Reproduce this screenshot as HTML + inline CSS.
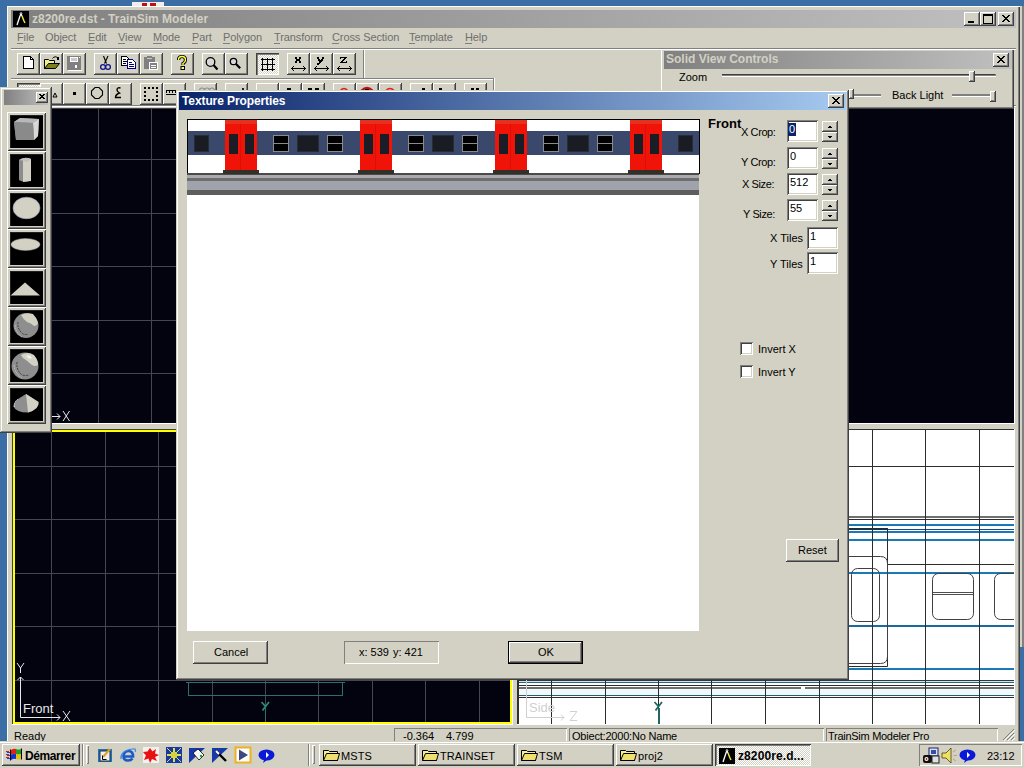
<!DOCTYPE html>
<html><head><meta charset="utf-8"><title>TrainSim Modeler</title>
<style>
*{margin:0;padding:0;box-sizing:border-box}
html,body{width:1024px;height:768px;overflow:hidden}
body{background:#3A6EA5;position:relative;font-family:"Liberation Sans",sans-serif;font-size:11px;color:#000}
.a{position:absolute}
svg.a{overflow:visible}
.btn{position:absolute;background:#D3D1C3;box-shadow:inset -1px -1px #404040,inset 1px 1px #FFFFFF,inset -2px -2px #808080,inset 2px 2px #D3D1C3}
.tb{position:absolute;background:#D3D1C3;box-shadow:inset -1px -1px #404040,inset 1px 1px #FFFFFF,inset -2px -2px #808080}
.sunk{position:absolute;background:#fff;box-shadow:inset 1px 1px #808080,inset -1px -1px #FFFFFF,inset 2px 2px #404040,inset -2px -2px #D3D1C3}
.pane{position:absolute;box-shadow:inset 1px 1px #808080,inset -1px -1px #FFFFFF}
.t{position:absolute;white-space:nowrap;line-height:1}
</style></head><body>

<div class="a" style="left:132px;top:2px;width:32px;height:5px;background:#f2ecec"></div>
<div class="a" style="left:142px;top:3px;width:5px;height:3px;background:#c01010"></div>
<div class="a" style="left:150px;top:3px;width:6px;height:3px;background:#c01010"></div>
<div class="a" style="left:1019px;top:6px;width:5px;height:641px;background:#D3D1C3;box-shadow:inset 1px 0 #fff,inset -2px 0 #808080"></div>
<div class="a" style="left:7px;top:6px;width:1013px;height:762px;background:#D3D1C3;box-shadow:inset 1px 1px #fff,inset -1px 0 #404040,inset -2px 0 #808080"></div>
<div class="a" style="left:11px;top:10px;width:1005px;height:18px;background:linear-gradient(90deg,#808080,#C0C0C0)"></div>
<svg class="a" style="left:13px;top:11px" width="16" height="16" viewBox="0 0 16 16"><rect width="16" height="16" fill="#000"/><path d="M4 14 L7 5 L8 3 L9 5" stroke="#fff" stroke-width="1.3" fill="none"/><path d="M9 5 L11 10 L12 12" stroke="#E8E840" stroke-width="1.5" fill="none"/><circle cx="8" cy="2.5" r="1" fill="none" stroke="#fff" stroke-width="0.6"/></svg>

<div class="t" style="left:32px;top:13px;font-size:12px;font-weight:bold;color:#D3D1C3;letter-spacing:0px">z8200re.dst - TrainSim Modeler</div>
<div class="btn" style="left:964px;top:12px;width:16px;height:14px;"></div>
<svg class="a" style="left:964px;top:12px;" width="16" height="14" viewBox="0 0 16 14" shape-rendering="crispEdges"><rect x="4" y="9" width="6" height="2" fill="#000"/></svg>
<div class="btn" style="left:980px;top:12px;width:16px;height:14px;"></div>
<svg class="a" style="left:980px;top:12px;" width="16" height="14" viewBox="0 0 16 14" shape-rendering="crispEdges"><rect x="3" y="2" width="9" height="9" fill="none" stroke="#000" stroke-width="1"/><rect x="3" y="2" width="9" height="2" fill="#000"/></svg>
<div class="btn" style="left:998px;top:12px;width:16px;height:14px;"></div>
<svg class="a" style="left:998px;top:12px;" width="16" height="14" viewBox="0 0 16 14" shape-rendering="crispEdges"><g fill="#000"><rect x="4" y="3" width="1" height="1"/><rect x="5" y="3" width="1" height="1"/><rect x="10" y="3" width="1" height="1"/><rect x="11" y="3" width="1" height="1"/><rect x="5" y="4" width="1" height="1"/><rect x="6" y="4" width="1" height="1"/><rect x="9" y="4" width="1" height="1"/><rect x="10" y="4" width="1" height="1"/><rect x="6" y="5" width="1" height="1"/><rect x="7" y="5" width="1" height="1"/><rect x="8" y="5" width="1" height="1"/><rect x="9" y="5" width="1" height="1"/><rect x="7" y="6" width="1" height="1"/><rect x="8" y="6" width="1" height="1"/><rect x="6" y="7" width="1" height="1"/><rect x="7" y="7" width="1" height="1"/><rect x="8" y="7" width="1" height="1"/><rect x="9" y="7" width="1" height="1"/><rect x="5" y="8" width="1" height="1"/><rect x="6" y="8" width="1" height="1"/><rect x="9" y="8" width="1" height="1"/><rect x="10" y="8" width="1" height="1"/><rect x="4" y="9" width="1" height="1"/><rect x="5" y="9" width="1" height="1"/><rect x="10" y="9" width="1" height="1"/><rect x="11" y="9" width="1" height="1"/></g></svg>
<div class="t" style="left:17px;top:32px;font-size:11px;color:#6E6E6E;letter-spacing:-0.1px">File</div>
<div class="t" style="left:45px;top:32px;font-size:11px;color:#6E6E6E;letter-spacing:-0.1px">Object</div>
<div class="t" style="left:88px;top:32px;font-size:11px;color:#6E6E6E;letter-spacing:-0.1px">Edit</div>
<div class="t" style="left:118px;top:32px;font-size:11px;color:#6E6E6E;letter-spacing:-0.1px">View</div>
<div class="t" style="left:153px;top:32px;font-size:11px;color:#6E6E6E;letter-spacing:-0.1px">Mode</div>
<div class="t" style="left:192px;top:32px;font-size:11px;color:#6E6E6E;letter-spacing:-0.1px">Part</div>
<div class="t" style="left:223px;top:32px;font-size:11px;color:#6E6E6E;letter-spacing:-0.1px">Polygon</div>
<div class="t" style="left:274px;top:32px;font-size:11px;color:#6E6E6E;letter-spacing:-0.1px">Transform</div>
<div class="t" style="left:332px;top:32px;font-size:11px;color:#6E6E6E;letter-spacing:-0.1px">Cross Section</div>
<div class="t" style="left:409px;top:32px;font-size:11px;color:#6E6E6E;letter-spacing:-0.1px">Template</div>
<div class="t" style="left:465px;top:32px;font-size:11px;color:#6E6E6E;letter-spacing:-0.1px">Help</div>
<div class="a" style="left:17px;top:43px;width:6px;height:1px;background:#808080"></div>
<div class="a" style="left:88px;top:43px;width:6px;height:1px;background:#808080"></div>
<div class="a" style="left:118px;top:43px;width:7px;height:1px;background:#808080"></div>
<div class="a" style="left:153px;top:43px;width:9px;height:1px;background:#808080"></div>
<div class="a" style="left:192px;top:43px;width:6px;height:1px;background:#808080"></div>
<div class="a" style="left:223px;top:43px;width:7px;height:1px;background:#808080"></div>
<div class="a" style="left:274px;top:43px;width:6px;height:1px;background:#808080"></div>
<div class="a" style="left:332px;top:43px;width:7px;height:1px;background:#808080"></div>
<div class="a" style="left:409px;top:43px;width:6px;height:1px;background:#808080"></div>
<div class="a" style="left:465px;top:43px;width:7px;height:1px;background:#808080"></div>
<div class="a" style="left:11px;top:48px;width:1005px;height:1px;background:#808080"></div>
<div class="a" style="left:11px;top:49px;width:1005px;height:1px;background:#fff"></div>
<div class="a" style="left:11px;top:50px;width:353px;height:29px;background:#D3D1C3"></div>
<div class="a" style="left:363px;top:50px;width:1px;height:29px;background:#808080"></div>
<div class="a" style="left:364px;top:50px;width:1px;height:29px;background:#fff"></div>
<div class="a" style="left:11px;top:78px;width:484px;height:1px;background:#808080"></div>
<div class="a" style="left:11px;top:79px;width:484px;height:1px;background:#fff"></div>
<div class="tb" style="left:17px;top:53px;width:23px;height:22px;"></div>
<div class="tb" style="left:40px;top:53px;width:23px;height:22px;"></div>
<div class="tb" style="left:63px;top:53px;width:23px;height:22px;"></div>
<div class="tb" style="left:94px;top:53px;width:23px;height:22px;"></div>
<div class="tb" style="left:117px;top:53px;width:23px;height:22px;"></div>
<div class="tb" style="left:140px;top:53px;width:23px;height:22px;"></div>
<div class="tb" style="left:171px;top:53px;width:23px;height:22px;"></div>
<div class="tb" style="left:202px;top:53px;width:23px;height:22px;"></div>
<div class="tb" style="left:225px;top:53px;width:23px;height:22px;"></div>
<div class="a" style="left:256px;top:53px;width:23px;height:22px;background-color:#E8E6E0;background-image:repeating-conic-gradient(#fff 0 25%,#D3D1C3 0 50%);background-size:2px 2px;box-shadow:inset 1px 1px #404040,inset 2px 2px #808080,inset -1px -1px #fff"></div>
<div class="tb" style="left:287px;top:53px;width:23px;height:22px;"></div>
<div class="tb" style="left:310px;top:53px;width:23px;height:22px;"></div>
<div class="tb" style="left:333px;top:53px;width:23px;height:22px;"></div>
<div class="a" style="left:11px;top:105px;width:1005px;height:1px;background:#808080"></div>
<div class="a" style="left:11px;top:106px;width:1005px;height:1px;background:#fff"></div>
<div class="a" style="left:17px;top:83px;width:23px;height:22px;background-color:#E8E6E0;background-image:repeating-conic-gradient(#fff 0 25%,#D3D1C3 0 50%);background-size:2px 2px;box-shadow:inset 1px 1px #404040,inset 2px 2px #808080,inset -1px -1px #fff"></div>
<div class="tb" style="left:40px;top:83px;width:23px;height:22px;"></div>
<div class="tb" style="left:63px;top:83px;width:23px;height:22px;"></div>
<div class="tb" style="left:86px;top:83px;width:23px;height:22px;"></div>
<div class="tb" style="left:109px;top:83px;width:23px;height:22px;"></div>
<div class="tb" style="left:140px;top:83px;width:23px;height:22px;"></div>
<div class="tb" style="left:163px;top:83px;width:23px;height:22px;"></div>
<div class="tb" style="left:194px;top:83px;width:23px;height:22px;"></div>
<div class="tb" style="left:225px;top:83px;width:23px;height:22px;"></div>
<div class="tb" style="left:256px;top:83px;width:23px;height:22px;"></div>
<div class="tb" style="left:279px;top:83px;width:23px;height:22px;"></div>
<div class="tb" style="left:302px;top:83px;width:23px;height:22px;"></div>
<div class="tb" style="left:333px;top:83px;width:23px;height:22px;"></div>
<div class="tb" style="left:356px;top:83px;width:23px;height:22px;"></div>
<div class="tb" style="left:379px;top:83px;width:23px;height:22px;"></div>
<div class="tb" style="left:410px;top:83px;width:23px;height:22px;"></div>
<div class="tb" style="left:433px;top:83px;width:23px;height:22px;"></div>
<div class="tb" style="left:464px;top:83px;width:23px;height:22px;"></div>
<div class="a" style="left:493px;top:78px;width:1px;height:28px;background:#808080"></div>
<div class="a" style="left:494px;top:78px;width:1px;height:28px;background:#fff"></div>
<svg class="a" style="left:17px;top:53px" width="23" height="22" viewBox="0 0 23 22" shape-rendering="crispEdges"><path d="M6.5 3.5H13.5L16.5 6.5V15.5H6.5Z" fill="#fff" stroke="#000"/><path d="M13 3.5V6.5H16.5" fill="none" stroke="#000"/></svg>
<svg class="a" style="left:40px;top:53px" width="23" height="22" viewBox="0 0 23 22"><path d="M4.5 6.5H8.5L9.5 7.5H14.5V15.5H4.5Z" fill="#F0F090" stroke="#000"/><path d="M4.5 15.5L8.5 10.5H19.5L15.5 15.5Z" fill="#80801A" stroke="#000"/><path d="M12.5 5.5Q15 2 18.5 5.5" fill="none" stroke="#000"/><path d="M17 4h2v3h-2z" fill="#000"/></svg>
<svg class="a" style="left:63px;top:53px" width="23" height="22" viewBox="0 0 23 22" shape-rendering="crispEdges"><rect x="4" y="3" width="14" height="14" fill="#808080"/><rect x="7" y="4" width="8" height="5" fill="#fff"/><rect x="8" y="5" width="6" height="3" fill="#C8C8C8"/><rect x="12" y="12" width="2" height="3" fill="#fff"/><rect x="16" y="4" width="1" height="1" fill="#fff"/><rect x="5" y="17" width="14" height="1" fill="#fff"/></svg>
<svg class="a" style="left:94px;top:53px" width="23" height="22" viewBox="0 0 23 22"><path d="M9.5 3L12.5 10.5M14 3L10.5 10.5" stroke="#000" stroke-width="1.1" fill="none"/><circle cx="9" cy="14" r="2.4" fill="none" stroke="#10108A" stroke-width="1.3"/><circle cx="14" cy="14" r="2.4" fill="none" stroke="#10108A" stroke-width="1.3"/></svg>
<svg class="a" style="left:117px;top:53px" width="23" height="22" viewBox="0 0 23 22" shape-rendering="crispEdges"><path d="M4.5 3.5H9.5L11.5 5.5V12.5H4.5Z" fill="#fff" stroke="#000"/><path d="M6 6h3v1h-3zM6 8h4v1h-4zM6 10h3v1h-3z" fill="#000"/><path d="M10.5 6.5H15.5L18.5 9.5V15.5H10.5Z" fill="#fff" stroke="#000080"/><path d="M12 9h3v1h-3zM12 11h5v1h-5zM12 13h5v1h-5z" fill="#000080"/></svg>
<svg class="a" style="left:140px;top:53px" width="23" height="22" viewBox="0 0 23 22" shape-rendering="crispEdges"><rect x="4" y="4" width="11" height="12" fill="#808080"/><rect x="7" y="3" width="5" height="2" fill="#808080"/><rect x="7" y="5" width="5" height="1" fill="#C8C8C8"/><rect x="9" y="9" width="9" height="8" fill="#fff"/><rect x="10" y="10" width="7" height="6" fill="#808080"/><rect x="11" y="12" width="5" height="1" fill="#fff"/><rect x="11" y="14" width="5" height="1" fill="#fff"/></svg>
<svg class="a" style="left:171px;top:53px" width="23" height="22" viewBox="0 0 23 22"><path d="M7.5 7Q7.5 3.5 11 3.5Q14.5 3.5 14.5 7Q14.5 9 12 10.5V12" fill="none" stroke="#000" stroke-width="3.2"/><path d="M7.5 7Q7.5 3.5 11 3.5Q14.5 3.5 14.5 7Q14.5 9 12 10.5V12" fill="none" stroke="#FFFF40" stroke-width="1.4"/><rect x="10" y="13.5" width="3.5" height="3" fill="#FFFF40" stroke="#000"/></svg>
<svg class="a" style="left:202px;top:53px" width="23" height="22" viewBox="0 0 23 22"><circle cx="8.5" cy="9" r="4.3" fill="#D8D8D8" stroke="#000" stroke-width="1.3"/><path d="M11.5 12L15.5 16.5" stroke="#000" stroke-width="2.2"/></svg>
<svg class="a" style="left:225px;top:53px" width="23" height="22" viewBox="0 0 23 22"><circle cx="8.5" cy="8.5" r="3.2" fill="#D8D8D8" stroke="#000" stroke-width="1.3"/><path d="M10.8 10.8L15.2 15.2" stroke="#000" stroke-width="2.2"/></svg>
<svg class="a" style="left:256px;top:53px" width="23" height="22" viewBox="0 0 23 22" shape-rendering="crispEdges"><path d="M5 6h14v1h-14zM5 11h14v1h-14zM5 16h14v1h-14zM6 5h1v13h-1zM11 5h1v13h-1zM16 5h1v13h-1z" fill="#000"/></svg>
<svg class="a" style="left:287px;top:53px" width="23" height="22" viewBox="0 0 23 22" shape-rendering="crispEdges"><rect x="8" y="4" width="1" height="1" fill="#000"/><rect x="9" y="4" width="1" height="1" fill="#000"/><rect x="12" y="4" width="1" height="1" fill="#000"/><rect x="13" y="4" width="1" height="1" fill="#000"/><rect x="8" y="5" width="1" height="1" fill="#000"/><rect x="9" y="5" width="1" height="1" fill="#000"/><rect x="12" y="5" width="1" height="1" fill="#000"/><rect x="13" y="5" width="1" height="1" fill="#000"/><rect x="9" y="6" width="1" height="1" fill="#000"/><rect x="10" y="6" width="1" height="1" fill="#000"/><rect x="11" y="6" width="1" height="1" fill="#000"/><rect x="12" y="6" width="1" height="1" fill="#000"/><rect x="9" y="7" width="1" height="1" fill="#000"/><rect x="10" y="7" width="1" height="1" fill="#000"/><rect x="11" y="7" width="1" height="1" fill="#000"/><rect x="12" y="7" width="1" height="1" fill="#000"/><rect x="8" y="8" width="1" height="1" fill="#000"/><rect x="9" y="8" width="1" height="1" fill="#000"/><rect x="12" y="8" width="1" height="1" fill="#000"/><rect x="13" y="8" width="1" height="1" fill="#000"/><rect x="8" y="9" width="1" height="1" fill="#000"/><rect x="9" y="9" width="1" height="1" fill="#000"/><rect x="12" y="9" width="1" height="1" fill="#000"/><rect x="13" y="9" width="1" height="1" fill="#000"/><rect x="4" y="15" width="15" height="1" fill="#000"/><rect x="5" y="14" width="1" height="1" fill="#000"/><rect x="17" y="14" width="1" height="1" fill="#000"/><rect x="5" y="16" width="1" height="1" fill="#000"/><rect x="17" y="16" width="1" height="1" fill="#000"/><rect x="6" y="13" width="1" height="1" fill="#000"/><rect x="16" y="13" width="1" height="1" fill="#000"/><rect x="6" y="17" width="1" height="1" fill="#000"/><rect x="16" y="17" width="1" height="1" fill="#000"/></svg>
<svg class="a" style="left:310px;top:53px" width="23" height="22" viewBox="0 0 23 22" shape-rendering="crispEdges"><rect x="7" y="4" width="1" height="1" fill="#000"/><rect x="8" y="4" width="1" height="1" fill="#000"/><rect x="12" y="4" width="1" height="1" fill="#000"/><rect x="13" y="4" width="1" height="1" fill="#000"/><rect x="7" y="5" width="1" height="1" fill="#000"/><rect x="8" y="5" width="1" height="1" fill="#000"/><rect x="12" y="5" width="1" height="1" fill="#000"/><rect x="13" y="5" width="1" height="1" fill="#000"/><rect x="8" y="6" width="1" height="1" fill="#000"/><rect x="9" y="6" width="1" height="1" fill="#000"/><rect x="11" y="6" width="1" height="1" fill="#000"/><rect x="12" y="6" width="1" height="1" fill="#000"/><rect x="8" y="7" width="1" height="1" fill="#000"/><rect x="9" y="7" width="1" height="1" fill="#000"/><rect x="10" y="7" width="1" height="1" fill="#000"/><rect x="11" y="7" width="1" height="1" fill="#000"/><rect x="12" y="7" width="1" height="1" fill="#000"/><rect x="9" y="8" width="1" height="1" fill="#000"/><rect x="10" y="8" width="1" height="1" fill="#000"/><rect x="11" y="8" width="1" height="1" fill="#000"/><rect x="9" y="9" width="1" height="1" fill="#000"/><rect x="10" y="9" width="1" height="1" fill="#000"/><rect x="7" y="10" width="1" height="1" fill="#000"/><rect x="8" y="10" width="1" height="1" fill="#000"/><rect x="9" y="10" width="1" height="1" fill="#000"/><rect x="7" y="11" width="1" height="1" fill="#000"/><rect x="8" y="11" width="1" height="1" fill="#000"/><rect x="4" y="15" width="15" height="1" fill="#000"/><rect x="5" y="14" width="1" height="1" fill="#000"/><rect x="17" y="14" width="1" height="1" fill="#000"/><rect x="5" y="16" width="1" height="1" fill="#000"/><rect x="17" y="16" width="1" height="1" fill="#000"/><rect x="6" y="13" width="1" height="1" fill="#000"/><rect x="16" y="13" width="1" height="1" fill="#000"/><rect x="6" y="17" width="1" height="1" fill="#000"/><rect x="16" y="17" width="1" height="1" fill="#000"/></svg>
<svg class="a" style="left:333px;top:53px" width="23" height="22" viewBox="0 0 23 22" shape-rendering="crispEdges"><rect x="7" y="4" width="1" height="1" fill="#000"/><rect x="8" y="4" width="1" height="1" fill="#000"/><rect x="9" y="4" width="1" height="1" fill="#000"/><rect x="10" y="4" width="1" height="1" fill="#000"/><rect x="11" y="4" width="1" height="1" fill="#000"/><rect x="12" y="4" width="1" height="1" fill="#000"/><rect x="13" y="4" width="1" height="1" fill="#000"/><rect x="7" y="5" width="1" height="1" fill="#000"/><rect x="11" y="5" width="1" height="1" fill="#000"/><rect x="12" y="5" width="1" height="1" fill="#000"/><rect x="10" y="6" width="1" height="1" fill="#000"/><rect x="11" y="6" width="1" height="1" fill="#000"/><rect x="9" y="7" width="1" height="1" fill="#000"/><rect x="10" y="7" width="1" height="1" fill="#000"/><rect x="8" y="8" width="1" height="1" fill="#000"/><rect x="9" y="8" width="1" height="1" fill="#000"/><rect x="13" y="8" width="1" height="1" fill="#000"/><rect x="7" y="9" width="1" height="1" fill="#000"/><rect x="8" y="9" width="1" height="1" fill="#000"/><rect x="9" y="9" width="1" height="1" fill="#000"/><rect x="10" y="9" width="1" height="1" fill="#000"/><rect x="11" y="9" width="1" height="1" fill="#000"/><rect x="12" y="9" width="1" height="1" fill="#000"/><rect x="13" y="9" width="1" height="1" fill="#000"/><rect x="4" y="15" width="15" height="1" fill="#000"/><rect x="5" y="14" width="1" height="1" fill="#000"/><rect x="17" y="14" width="1" height="1" fill="#000"/><rect x="5" y="16" width="1" height="1" fill="#000"/><rect x="17" y="16" width="1" height="1" fill="#000"/><rect x="6" y="13" width="1" height="1" fill="#000"/><rect x="16" y="13" width="1" height="1" fill="#000"/><rect x="6" y="17" width="1" height="1" fill="#000"/><rect x="16" y="17" width="1" height="1" fill="#000"/></svg>
<svg class="a" style="left:40px;top:83px" width="23" height="22" viewBox="0 0 23 22"><path d="M13 14L15 10L17 14Z" fill="#D3D1C3" stroke="#000"/></svg>
<svg class="a" style="left:63px;top:83px" width="23" height="22" viewBox="0 0 23 22" shape-rendering="crispEdges"><rect x="10" y="9" width="3" height="3" fill="#000"/></svg>
<svg class="a" style="left:86px;top:83px" width="23" height="22" viewBox="0 0 23 22"><path d="M9 4.5H13L16.5 8V12L13 15.5H9L5.5 12V8Z" fill="none" stroke="#000" stroke-width="1.1"/></svg>
<svg class="a" style="left:109px;top:83px" width="23" height="22" viewBox="0 0 23 22"><path d="M11.5 5Q8 4 8 7Q8 8.5 10.5 10Q6.5 11.5 6.5 14.5H12" fill="none" stroke="#000" stroke-width="1.4"/></svg>
<svg class="a" style="left:140px;top:83px" width="23" height="22" viewBox="0 0 23 22" shape-rendering="crispEdges"><rect x="4" y="4" width="2" height="2" fill="#000"/><rect x="8" y="4" width="2" height="2" fill="#000"/><rect x="12" y="4" width="2" height="2" fill="#000"/><rect x="16" y="4" width="2" height="2" fill="#000"/><rect x="4" y="8" width="2" height="2" fill="#000"/><rect x="16" y="8" width="2" height="2" fill="#000"/><rect x="4" y="12" width="2" height="2" fill="#000"/><rect x="16" y="12" width="2" height="2" fill="#000"/><rect x="4" y="16" width="2" height="2" fill="#000"/><rect x="8" y="16" width="2" height="2" fill="#000"/><rect x="12" y="16" width="2" height="2" fill="#000"/><rect x="16" y="16" width="2" height="2" fill="#000"/></svg>
<svg class="a" style="left:163px;top:83px" width="23" height="22" viewBox="0 0 23 22" shape-rendering="crispEdges"><rect x="3" y="7" width="11" height="1" fill="#000"/><rect x="3" y="8" width="1" height="2" fill="#000"/><rect x="6" y="8" width="1" height="2" fill="#000"/><rect x="9" y="8" width="1" height="2" fill="#000"/><rect x="12" y="8" width="1" height="2" fill="#000"/><rect x="3" y="11" width="11" height="1" fill="#000"/></svg>
<svg class="a" style="left:194px;top:83px" width="23" height="22" viewBox="0 0 23 22"><path d="M5.5 8Q5.5 5 8 5Q10.5 5 10.5 8M10.5 8Q10.5 5 13 5Q15.5 5 15.5 8M15.5 8Q15.5 5 18 5Q20.5 5 20.5 8" fill="none" stroke="#909090" stroke-width="1.2"/></svg>
<svg class="a" style="left:225px;top:83px" width="23" height="22" viewBox="0 0 23 22" shape-rendering="crispEdges"><rect x="17" y="5" width="2" height="2" fill="#202020"/></svg>
<svg class="a" style="left:279px;top:83px" width="23" height="22" viewBox="0 0 23 22" shape-rendering="crispEdges"><rect x="8" y="5" width="4" height="2" fill="#000"/></svg>
<svg class="a" style="left:302px;top:83px" width="23" height="22" viewBox="0 0 23 22" shape-rendering="crispEdges"><rect x="6" y="5" width="4" height="2" fill="#000"/><rect x="13" y="5" width="4" height="2" fill="#000"/></svg>
<svg class="a" style="left:333px;top:83px" width="23" height="22" viewBox="0 0 23 22"><path d="M7.5 7.5Q11 3.5 14.5 7.5" fill="none" stroke="#E02020" stroke-width="1.6"/></svg>
<svg class="a" style="left:356px;top:83px" width="23" height="22" viewBox="0 0 23 22"><path d="M5.5 7.5Q11 2.5 16.5 7.5" fill="none" stroke="#C01010" stroke-width="2.2"/><path d="M9 7H13" stroke="#000" stroke-width="2"/></svg>
<svg class="a" style="left:379px;top:83px" width="23" height="22" viewBox="0 0 23 22"><path d="M7 7.5Q11 3.5 15 7.5" fill="none" stroke="#E02020" stroke-width="1.6"/></svg>
<svg class="a" style="left:410px;top:83px" width="23" height="22" viewBox="0 0 23 22" shape-rendering="crispEdges"><rect x="12" y="5" width="3" height="2" fill="#000"/></svg>
<svg class="a" style="left:433px;top:83px" width="23" height="22" viewBox="0 0 23 22" shape-rendering="crispEdges"><rect x="6" y="5" width="3" height="2" fill="#000"/></svg>
<svg class="a" style="left:464px;top:83px" width="23" height="22" viewBox="0 0 23 22" shape-rendering="crispEdges"><rect x="7" y="5" width="3" height="3" fill="#000"/><rect x="12" y="5" width="3" height="3" fill="#000"/></svg>
<div class="a" style="left:11px;top:107px;width:1005px;height:620px;background:#D3D1C3"></div>
<div class="a" style="left:12px;top:108px;width:501px;height:316px;background:#fff"></div>
<div class="a" style="left:12px;top:108px;width:500px;height:315px;background:#404040"></div>
<div class="a" style="left:13px;top:109px;width:499px;height:314px;background:#03030F"></div>
<div class="a" style="left:517px;top:108px;width:498px;height:316px;background:#fff"></div>
<div class="a" style="left:517px;top:108px;width:497px;height:315px;background:#404040"></div>
<div class="a" style="left:518px;top:109px;width:496px;height:314px;background:#03030F"></div>
<div class="a" style="left:12px;top:429px;width:501px;height:296px;background:#fff"></div>
<div class="a" style="left:12px;top:429px;width:500px;height:295px;background:#404040"></div>
<div class="a" style="left:13px;top:430px;width:499px;height:294px;background:#FFFF00"></div>
<div class="a" style="left:15px;top:432px;width:495px;height:290px;background:#03030F"></div>
<div class="a" style="left:517px;top:429px;width:498px;height:296px;background:#fff"></div>
<div class="a" style="left:517px;top:429px;width:497px;height:295px;background:#303030"></div>
<div class="a" style="left:519px;top:430px;width:495px;height:294px;background:#fff"></div>
<div class="a" style="left:45px;top:109px;width:1px;height:314px;background:#46464E;"></div>
<div class="a" style="left:98px;top:109px;width:1px;height:314px;background:#46464E;"></div>
<div class="a" style="left:151px;top:109px;width:1px;height:314px;background:#46464E;"></div>
<div class="a" style="left:204px;top:109px;width:1px;height:314px;background:#46464E;"></div>
<div class="a" style="left:256px;top:109px;width:1px;height:314px;background:#46464E;"></div>
<div class="a" style="left:309px;top:109px;width:1px;height:314px;background:#46464E;"></div>
<div class="a" style="left:361px;top:109px;width:1px;height:314px;background:#46464E;"></div>
<div class="a" style="left:414px;top:109px;width:1px;height:314px;background:#46464E;"></div>
<div class="a" style="left:466px;top:109px;width:1px;height:314px;background:#46464E;"></div>
<div class="a" style="left:15px;top:159px;width:496px;height:1px;background:#46464E;"></div>
<div class="a" style="left:15px;top:213px;width:496px;height:1px;background:#46464E;"></div>
<div class="a" style="left:15px;top:266px;width:496px;height:1px;background:#46464E;"></div>
<div class="a" style="left:15px;top:320px;width:496px;height:1px;background:#46464E;"></div>
<div class="a" style="left:15px;top:373px;width:496px;height:1px;background:#46464E;"></div>
<svg class="a" style="left:50px;top:408px" width="24" height="16" viewBox="0 0 24 16"><path d="M0 8.5H10M7 5.5L10 8.5L7 11.5M13 3L19.5 13M19.5 3L13 13" stroke="#E8E8E8" stroke-width="1" fill="none"/></svg>
<div class="a" style="left:51px;top:432px;width:1px;height:290px;background:#46464E;"></div>
<div class="a" style="left:105px;top:432px;width:1px;height:290px;background:#46464E;"></div>
<div class="a" style="left:158px;top:432px;width:1px;height:290px;background:#46464E;"></div>
<div class="a" style="left:212px;top:432px;width:1px;height:290px;background:#46464E;"></div>
<div class="a" style="left:265px;top:432px;width:1px;height:290px;background:#46464E;"></div>
<div class="a" style="left:318px;top:432px;width:1px;height:290px;background:#46464E;"></div>
<div class="a" style="left:372px;top:432px;width:1px;height:290px;background:#46464E;"></div>
<div class="a" style="left:425px;top:432px;width:1px;height:290px;background:#46464E;"></div>
<div class="a" style="left:479px;top:432px;width:1px;height:290px;background:#46464E;"></div>
<div class="a" style="left:15px;top:466px;width:495px;height:1px;background:#46464E;"></div>
<div class="a" style="left:15px;top:519px;width:495px;height:1px;background:#46464E;"></div>
<div class="a" style="left:15px;top:573px;width:495px;height:1px;background:#46464E;"></div>
<div class="a" style="left:15px;top:626px;width:495px;height:1px;background:#46464E;"></div>
<div class="a" style="left:15px;top:680px;width:495px;height:1px;background:#46464E;"></div>
<div class="a" style="left:186px;top:682px;width:159px;height:1px;background:#2A7070;"></div>
<div class="a" style="left:188px;top:682px;width:1px;height:14px;background:#2A7070;"></div>
<div class="a" style="left:342px;top:682px;width:1px;height:14px;background:#2A7070;"></div>
<div class="a" style="left:188px;top:695px;width:155px;height:1px;background:#2A7070;"></div>
<div class="a" style="left:265px;top:708px;width:1px;height:14px;background:#2A7070;"></div>
<svg class="a" style="left:258px;top:698px" width="14" height="16" viewBox="0 0 14 16"><path d="M3.5 4L7.5 8.5M11 4L7.5 8.5L4.5 12.5" stroke="#2E8A78" stroke-width="1.8" fill="none"/></svg>
<svg class="a" style="left:14px;top:660px" width="62" height="64" viewBox="0 0 62 64"><path d="M6.5 17V57.5H46M3.5 20L6.5 17L9.5 20M43 54.5L46 57.5L43 60.5M49 51L56 61M56 51L49 61M3 3L6.5 8L10 3M6.5 8V13" stroke="#E8E8E8" stroke-width="1" fill="none"/></svg>
<div class="t" style="left:23px;top:702px;font-size:13px;color:#E8E8E8">Front</div>
<div class="a" style="left:519px;top:466px;width:495px;height:1px;background:#2C2C2C;"></div>
<div class="a" style="left:519px;top:516px;width:495px;height:2px;background:#707070;"></div>
<div class="a" style="left:519px;top:519px;width:495px;height:1px;background:#2C2C2C;"></div>
<div class="a" style="left:519px;top:524px;width:495px;height:2px;background:#1A7AB8;"></div>
<div class="a" style="left:519px;top:529px;width:495px;height:1px;background:#1A4A80;"></div>
<div class="a" style="left:519px;top:528px;width:369px;height:2px;background:#103058;"></div>
<div class="a" style="left:519px;top:531px;width:495px;height:2px;background:#1A7AB8;"></div>
<div class="a" style="left:519px;top:539px;width:495px;height:2px;background:#1A7AB8;"></div>
<div class="a" style="left:887px;top:564px;width:127px;height:1px;background:#2C2C2C;"></div>
<div class="a" style="left:519px;top:572px;width:495px;height:2px;background:#1A7AB8;"></div>
<div class="a" style="left:519px;top:625px;width:495px;height:2px;background:#1A6AA0;"></div>
<div class="a" style="left:519px;top:668px;width:495px;height:2px;background:#1A7AB8;"></div>
<svg class="a" style="left:519px;top:520px;overflow:hidden" width="495" height="210" viewBox="0 0 495 210" fill="none" stroke-width="1"><path d="M-10 9.5H368.5V146.5H-10" stroke="#2C2C2C"/><path d="M-10 36.5H361.5Q368.5 36.5 368.5 43.5V136.5Q368.5 143.5 361.5 143.5H-10" stroke="#404040"/><rect x="332.5" y="48.5" width="28" height="53" rx="6" stroke="#404040"/><rect x="413.5" y="53.5" width="41" height="46" rx="6" stroke="#404040"/><path d="M414 72.5H454M414 74.5H454" stroke="#505050"/><rect x="475.5" y="53.5" width="41" height="46" rx="6" stroke="#404040"/></svg>
<div class="a" style="left:519px;top:680px;width:495px;height:1px;background:#343444;"></div>
<div class="a" style="left:519px;top:681px;width:495px;height:1px;background:#C8E8F0;"></div>
<div class="a" style="left:519px;top:682px;width:495px;height:1px;background:#286878;"></div>
<div class="a" style="left:519px;top:685px;width:495px;height:1px;background:#2C2C2C;"></div>
<div class="a" style="left:519px;top:687px;width:495px;height:2px;background:#6E6E6E;"></div>
<div class="a" style="left:801px;top:687px;width:4px;height:2px;background:#fff;"></div>
<div class="a" style="left:519px;top:689px;width:495px;height:6px;background:#F0FAFC;"></div>
<div class="a" style="left:519px;top:695px;width:495px;height:1px;background:#206070;"></div>
<div class="a" style="left:519px;top:697px;width:495px;height:1px;background:#2C2C2C;"></div>
<div class="a" style="left:551px;top:430px;width:1px;height:294px;background:#2C2C2C;"></div>
<div class="a" style="left:605px;top:430px;width:1px;height:294px;background:#2C2C2C;"></div>
<div class="a" style="left:658px;top:430px;width:1px;height:294px;background:#2C2C2C;"></div>
<div class="a" style="left:711px;top:430px;width:1px;height:294px;background:#2C2C2C;"></div>
<div class="a" style="left:765px;top:430px;width:1px;height:294px;background:#2C2C2C;"></div>
<div class="a" style="left:819px;top:430px;width:1px;height:294px;background:#2C2C2C;"></div>
<div class="a" style="left:872px;top:430px;width:1px;height:294px;background:#2C2C2C;"></div>
<div class="a" style="left:925px;top:430px;width:1px;height:294px;background:#2C2C2C;"></div>
<div class="a" style="left:979px;top:430px;width:1px;height:294px;background:#2C2C2C;"></div>
<div class="a" style="left:658px;top:708px;width:2px;height:16px;background:#206868;"></div>
<svg class="a" style="left:651px;top:698px" width="14" height="16" viewBox="0 0 14 16"><path d="M3.5 4L7.5 8.5M11 4L7.5 8.5L4.5 12.5" stroke="#1A6A60" stroke-width="1.8" fill="none"/></svg>
<svg class="a" style="left:520px;top:678px" width="62" height="46" viewBox="0 0 62 46"><path d="M6.5 2V39.5H44M41 36.5L44 39.5L41 42.5M50 33.5H57L50 42.5H57" stroke="#D0D0D0" stroke-width="1" fill="none"/></svg>
<div class="t" style="left:529px;top:701px;font-size:13px;color:#D0D0D0">Side</div>
<div class="a" style="left:11px;top:726px;width:1005px;height:15px;background:#D3D1C3"></div>
<div class="pane" style="left:394px;top:728px;width:173px;height:16px;"></div>
<div class="pane" style="left:569px;top:728px;width:255px;height:16px;"></div>
<div class="pane" style="left:826px;top:728px;width:172px;height:16px;"></div>
<div class="t" style="left:14px;top:731px;font-size:11px;">Ready</div>
<div class="t" style="left:403px;top:731px;font-size:11px;">-0.364</div>
<div class="t" style="left:446px;top:731px;font-size:11px;">4.799</div>
<div class="t" style="left:572px;top:731px;font-size:11px;letter-spacing:-0.2px">Obiect:2000:No Name</div>
<div class="t" style="left:828px;top:731px;font-size:11px;letter-spacing:-0.28px">TrainSim Modeler Pro</div>
<svg class="a" style="left:1001px;top:728px;" width="14" height="13" viewBox="0 0 14 13" shape-rendering="crispEdges"><path d="M12.5 1.5L1.5 12.5M12.5 5.5L5.5 12.5M12.5 9.5L9.5 12.5" stroke="#808080" stroke-width="1" fill="none"/><path d="M13.5 2.5L2.5 13.5M13.5 6.5L6.5 13.5M13.5 10.5L10.5 13.5" stroke="#fff" stroke-width="1" fill="none"/></svg>
<div class="a" style="left:0px;top:87px;width:52px;height:346px;background:#D3D1C3;box-shadow:inset -1px -1px #404040,inset 1px 1px #D3D1C3,inset -2px -2px #808080,inset 2px 2px #fff"></div>
<div class="a" style="left:4px;top:90px;width:44px;height:15px;background:linear-gradient(90deg,#808080,#C0C0C0)"></div>
<div class="btn" style="left:36px;top:92px;width:12px;height:11px;"></div>
<svg class="a" style="left:36px;top:92px;" width="12" height="11" viewBox="0 0 12 11" shape-rendering="crispEdges"><g fill="#000"><rect x="3" y="2" width="1" height="1"/><rect x="4" y="2" width="1" height="1"/><rect x="7" y="2" width="1" height="1"/><rect x="8" y="2" width="1" height="1"/><rect x="4" y="3" width="1" height="1"/><rect x="5" y="3" width="1" height="1"/><rect x="6" y="3" width="1" height="1"/><rect x="7" y="3" width="1" height="1"/><rect x="5" y="4" width="1" height="1"/><rect x="6" y="4" width="1" height="1"/><rect x="4" y="5" width="1" height="1"/><rect x="5" y="5" width="1" height="1"/><rect x="6" y="5" width="1" height="1"/><rect x="7" y="5" width="1" height="1"/><rect x="3" y="6" width="1" height="1"/><rect x="4" y="6" width="1" height="1"/><rect x="7" y="6" width="1" height="1"/><rect x="8" y="6" width="1" height="1"/></g></svg>
<div class="a" style="left:7px;top:112px;width:39px;height:39px;background:#D3D1C3;box-shadow:inset 1px 1px #fff,inset -1px -1px #404040,inset 2px 2px #D3D1C3,inset -2px -2px #808080"></div>
<div class="a" style="left:10px;top:115px;width:33px;height:33px;background:#000;box-shadow:inset 1px 1px #202020"></div>
<div class="a" style="left:7px;top:151px;width:39px;height:39px;background:#D3D1C3;box-shadow:inset 1px 1px #fff,inset -1px -1px #404040,inset 2px 2px #D3D1C3,inset -2px -2px #808080"></div>
<div class="a" style="left:10px;top:154px;width:33px;height:33px;background:#000;box-shadow:inset 1px 1px #202020"></div>
<div class="a" style="left:7px;top:190px;width:39px;height:39px;background:#D3D1C3;box-shadow:inset 1px 1px #fff,inset -1px -1px #404040,inset 2px 2px #D3D1C3,inset -2px -2px #808080"></div>
<div class="a" style="left:10px;top:193px;width:33px;height:33px;background:#000;box-shadow:inset 1px 1px #202020"></div>
<div class="a" style="left:7px;top:229px;width:39px;height:39px;background:#D3D1C3;box-shadow:inset 1px 1px #fff,inset -1px -1px #404040,inset 2px 2px #D3D1C3,inset -2px -2px #808080"></div>
<div class="a" style="left:10px;top:232px;width:33px;height:33px;background:#000;box-shadow:inset 1px 1px #202020"></div>
<div class="a" style="left:7px;top:268px;width:39px;height:39px;background:#D3D1C3;box-shadow:inset 1px 1px #fff,inset -1px -1px #404040,inset 2px 2px #D3D1C3,inset -2px -2px #808080"></div>
<div class="a" style="left:10px;top:271px;width:33px;height:33px;background:#000;box-shadow:inset 1px 1px #202020"></div>
<div class="a" style="left:7px;top:307px;width:39px;height:39px;background:#D3D1C3;box-shadow:inset 1px 1px #fff,inset -1px -1px #404040,inset 2px 2px #D3D1C3,inset -2px -2px #808080"></div>
<div class="a" style="left:10px;top:310px;width:33px;height:33px;background:#000;box-shadow:inset 1px 1px #202020"></div>
<div class="a" style="left:7px;top:346px;width:39px;height:39px;background:#D3D1C3;box-shadow:inset 1px 1px #fff,inset -1px -1px #404040,inset 2px 2px #D3D1C3,inset -2px -2px #808080"></div>
<div class="a" style="left:10px;top:349px;width:33px;height:33px;background:#000;box-shadow:inset 1px 1px #202020"></div>
<div class="a" style="left:7px;top:385px;width:39px;height:39px;background:#D3D1C3;box-shadow:inset 1px 1px #fff,inset -1px -1px #404040,inset 2px 2px #D3D1C3,inset -2px -2px #808080"></div>
<div class="a" style="left:10px;top:388px;width:33px;height:33px;background:#000;box-shadow:inset 1px 1px #202020"></div>
<svg class="a" style="left:10px;top:115px" width="33" height="33" viewBox="0 0 33 33"><path d="M4 7L10 3L29 4L28 21L24 25L6 25Z" fill="#8C8C8C"/><path d="M4 7L10 3L29 4L23 8Z" fill="#B8B8B8"/><path d="M23 8L29 4L28 21L24 25Z" fill="#D8D8D8"/><path d="M4 7L23 8L24 25L6 25Z" fill="#8A8A8A"/></svg>
<svg class="a" style="left:10px;top:154px" width="33" height="33" viewBox="0 0 33 33"><path d="M9 6Q13 3 19 5V27Q13 29 9 26Z" fill="#8C8C8C"/><path d="M13 5Q17 3 21 5V27L13 28Z" fill="#D3D1C3"/><path d="M9 6Q15 2 21 5L17 8Q12 6 9 6Z" fill="#C0C0C0"/></svg>
<svg class="a" style="left:10px;top:193px" width="33" height="33" viewBox="0 0 33 33"><ellipse cx="16.5" cy="15" rx="13.5" ry="10.8" fill="#D3D1C3" stroke="#9AA0C0" stroke-width="0.6"/></svg>
<svg class="a" style="left:10px;top:232px" width="33" height="33" viewBox="0 0 33 33"><ellipse cx="15.5" cy="12.5" rx="14.5" ry="6" fill="#D3D1C3" stroke="#9A9AA0" stroke-width="0.5"/></svg>
<svg class="a" style="left:10px;top:271px" width="33" height="33" viewBox="0 0 33 33"><path d="M15 11.5L30 24.5H0.5Z" fill="#D3D1C3"/></svg>
<svg class="a" style="left:13px;top:313px" width="26" height="26" viewBox="0 0 26 26"><circle cx="13" cy="12.5" r="12.5" fill="#8E8E8E"/><path d="M8 2Q14 -1 20 1Q24 5 25 10Q24 13 21 13Q18 10 14 9Q10 6 8 2Z" fill="#D3D1C3"/><path d="M2 12Q3 20 9 24" fill="none" stroke="#D0D0D0" stroke-width="0.8" stroke-dasharray="1.5 1"/><path d="M5 9Q4 16 10 21Q13 22 15 21" fill="none" stroke="#202020" stroke-width="0.7" stroke-dasharray="2 1"/></svg>
<svg class="a" style="left:12px;top:352px" width="28" height="28" viewBox="0 0 28 28"><circle cx="13" cy="14" r="13.5" fill="#8E8E8E"/><path d="M9 3Q16 -1 22 3Q26 8 26 13Q23 15 20 13Q16 10 14 8Q10 6 9 3Z" fill="#D3D1C3"/><path d="M14 4Q18 2 20 6Q17 8 14 4Z" fill="#F0F0F0"/><path d="M2 13Q3 22 10 26" fill="none" stroke="#D0D0D0" stroke-width="0.8" stroke-dasharray="1.5 1"/><path d="M5 10Q4 18 10 23Q14 24 17 23" fill="none" stroke="#202020" stroke-width="0.7" stroke-dasharray="2 1"/></svg>
<svg class="a" style="left:10px;top:388px" width="33" height="33" viewBox="0 0 33 33"><path d="M16 6L28.5 14Q29.5 21 18 24.5Q6 24.5 3.5 18.5Q3.5 14 8 11Z" fill="#8E8E8E"/><path d="M16 6L28.5 14Q29.5 21 18 24.5Z" fill="#D3D1C3"/><path d="M4.5 19Q3.5 14 8.5 11" fill="none" stroke="#E0E0E0" stroke-width="0.8" stroke-dasharray="1.5 1"/></svg>
<div class="a" style="left:661px;top:49px;width:353px;height:60px;background:#D3D1C3;box-shadow:inset 1px 1px #fff,inset -1px -1px #404040,inset -2px -2px #808080"></div>
<div class="a" style="left:664px;top:51px;width:348px;height:18px;background:linear-gradient(90deg,#808080,#C0C0C0)"></div>
<div class="t" style="left:666px;top:53px;font-size:12px;font-weight:bold;color:#D3D1C3">Solid View Controls</div>
<div class="btn" style="left:993px;top:53px;width:16px;height:14px;"></div>
<svg class="a" style="left:993px;top:53px;" width="16" height="14" viewBox="0 0 16 14" shape-rendering="crispEdges"><g fill="#000"><rect x="4" y="3" width="1" height="1"/><rect x="5" y="3" width="1" height="1"/><rect x="10" y="3" width="1" height="1"/><rect x="11" y="3" width="1" height="1"/><rect x="5" y="4" width="1" height="1"/><rect x="6" y="4" width="1" height="1"/><rect x="9" y="4" width="1" height="1"/><rect x="10" y="4" width="1" height="1"/><rect x="6" y="5" width="1" height="1"/><rect x="7" y="5" width="1" height="1"/><rect x="8" y="5" width="1" height="1"/><rect x="9" y="5" width="1" height="1"/><rect x="7" y="6" width="1" height="1"/><rect x="8" y="6" width="1" height="1"/><rect x="6" y="7" width="1" height="1"/><rect x="7" y="7" width="1" height="1"/><rect x="8" y="7" width="1" height="1"/><rect x="9" y="7" width="1" height="1"/><rect x="5" y="8" width="1" height="1"/><rect x="6" y="8" width="1" height="1"/><rect x="9" y="8" width="1" height="1"/><rect x="10" y="8" width="1" height="1"/><rect x="4" y="9" width="1" height="1"/><rect x="5" y="9" width="1" height="1"/><rect x="10" y="9" width="1" height="1"/><rect x="11" y="9" width="1" height="1"/></g></svg>
<div class="t" style="left:679px;top:72px;font-size:11px;">Zoom</div>
<div class="a" style="left:722px;top:74px;width:274px;height:2px;background:#808080;box-shadow:0 1px #fff"></div>
<div class="a" style="left:722px;top:74px;width:273px;height:1px;background:#404040"></div>
<div class="btn" style="left:969px;top:71px;width:6px;height:11px;"></div>
<div class="a" style="left:848px;top:94px;width:33px;height:2px;background:#808080;box-shadow:0 1px #fff"></div>
<div class="btn" style="left:849px;top:89px;width:5px;height:10px;"></div>
<div class="t" style="left:892px;top:90px;font-size:11px;">Back Light</div>
<div class="a" style="left:952px;top:94px;width:43px;height:2px;background:#808080;box-shadow:0 1px #fff"></div>
<div class="btn" style="left:990px;top:91px;width:6px;height:11px;"></div>
<div class="a" style="left:176px;top:90px;width:673px;height:590px;background:#D3D1C3;box-shadow:inset -1px -1px #404040,inset 1px 1px #D3D1C3,inset -2px -2px #808080,inset 2px 2px #fff"></div>
<div class="a" style="left:179px;top:92px;width:667px;height:18px;background:linear-gradient(90deg,#0A246A,#A6CAF0)"></div>
<div class="t" style="left:182px;top:95px;font-size:12px;font-weight:bold;color:#fff;letter-spacing:-0.1px">Texture Properties</div>
<div class="btn" style="left:828px;top:94px;width:16px;height:14px;"></div>
<svg class="a" style="left:828px;top:94px;" width="16" height="14" viewBox="0 0 16 14" shape-rendering="crispEdges"><g fill="#000"><rect x="4" y="3" width="1" height="1"/><rect x="5" y="3" width="1" height="1"/><rect x="10" y="3" width="1" height="1"/><rect x="11" y="3" width="1" height="1"/><rect x="5" y="4" width="1" height="1"/><rect x="6" y="4" width="1" height="1"/><rect x="9" y="4" width="1" height="1"/><rect x="10" y="4" width="1" height="1"/><rect x="6" y="5" width="1" height="1"/><rect x="7" y="5" width="1" height="1"/><rect x="8" y="5" width="1" height="1"/><rect x="9" y="5" width="1" height="1"/><rect x="7" y="6" width="1" height="1"/><rect x="8" y="6" width="1" height="1"/><rect x="6" y="7" width="1" height="1"/><rect x="7" y="7" width="1" height="1"/><rect x="8" y="7" width="1" height="1"/><rect x="9" y="7" width="1" height="1"/><rect x="5" y="8" width="1" height="1"/><rect x="6" y="8" width="1" height="1"/><rect x="9" y="8" width="1" height="1"/><rect x="10" y="8" width="1" height="1"/><rect x="4" y="9" width="1" height="1"/><rect x="5" y="9" width="1" height="1"/><rect x="10" y="9" width="1" height="1"/><rect x="11" y="9" width="1" height="1"/></g></svg>
<div class="a" style="left:187px;top:119px;width:512px;height:512px;background:#fff"></div>
<svg class="a" style="left:187px;top:119px" width="513" height="77" viewBox="0 0 513 77" shape-rendering="crispEdges">
<rect x="0" y="0" width="513" height="55" fill="#000" />
<rect x="1" y="1" width="511" height="11" fill="#fff" />
<rect x="1" y="12" width="511" height="24" fill="#3A486C" />
<rect x="1" y="36" width="511" height="18" fill="#fff" />
<rect x="0" y="54" width="512" height="2" fill="#4A4A4A" />
<rect x="0" y="56" width="512" height="3" fill="#A9A9AE" />
<rect x="0" y="59" width="512" height="3" fill="#6E6E6E" />
<rect x="0" y="62" width="512" height="9" fill="#A0A3AC" />
<rect x="0" y="71" width="512" height="5" fill="#5E5E5E" />
<rect x="36" y="51" width="36" height="4" fill="#33302A" />
<rect x="38" y="1" width="32" height="50" fill="#F01408" />
<rect x="38" y="1" width="32" height="4" fill="#E83020" />
<rect x="53" y="5" width="1" height="46" fill="#D81008" />
<rect x="42" y="15" width="9" height="20" fill="#1A1C26" />
<rect x="58" y="15" width="9" height="20" fill="#1A1C26" />
<rect x="171" y="51" width="36" height="4" fill="#33302A" />
<rect x="173" y="1" width="32" height="50" fill="#F01408" />
<rect x="173" y="1" width="32" height="4" fill="#E83020" />
<rect x="188" y="5" width="1" height="46" fill="#D81008" />
<rect x="177" y="15" width="9" height="20" fill="#1A1C26" />
<rect x="193" y="15" width="9" height="20" fill="#1A1C26" />
<rect x="306" y="51" width="36" height="4" fill="#33302A" />
<rect x="308" y="1" width="32" height="50" fill="#F01408" />
<rect x="308" y="1" width="32" height="4" fill="#E83020" />
<rect x="323" y="5" width="1" height="46" fill="#D81008" />
<rect x="312" y="15" width="9" height="20" fill="#1A1C26" />
<rect x="328" y="15" width="9" height="20" fill="#1A1C26" />
<rect x="441" y="51" width="36" height="4" fill="#33302A" />
<rect x="443" y="1" width="32" height="50" fill="#F01408" />
<rect x="443" y="1" width="32" height="4" fill="#E83020" />
<rect x="458" y="5" width="1" height="46" fill="#D81008" />
<rect x="447" y="15" width="9" height="20" fill="#1A1C26" />
<rect x="463" y="15" width="9" height="20" fill="#1A1C26" />
<rect x="110" y="16" width="22" height="17" fill="#2A2C34" />
<rect x="111" y="17" width="20" height="15" fill="#1A1C24" />
<rect x="86" y="16" width="16" height="17" fill="#8A8A90" />
<rect x="87" y="17" width="14" height="15" fill="#000" />
<rect x="87" y="24" width="14" height="1" fill="#8A8A90" />
<rect x="140" y="16" width="16" height="17" fill="#8A8A90" />
<rect x="141" y="17" width="14" height="15" fill="#000" />
<rect x="141" y="24" width="14" height="1" fill="#8A8A90" />
<rect x="245" y="16" width="22" height="17" fill="#2A2C34" />
<rect x="246" y="17" width="20" height="15" fill="#1A1C24" />
<rect x="221" y="16" width="16" height="17" fill="#8A8A90" />
<rect x="222" y="17" width="14" height="15" fill="#000" />
<rect x="222" y="24" width="14" height="1" fill="#8A8A90" />
<rect x="275" y="16" width="16" height="17" fill="#8A8A90" />
<rect x="276" y="17" width="14" height="15" fill="#000" />
<rect x="276" y="24" width="14" height="1" fill="#8A8A90" />
<rect x="380" y="16" width="22" height="17" fill="#2A2C34" />
<rect x="381" y="17" width="20" height="15" fill="#1A1C24" />
<rect x="356" y="16" width="16" height="17" fill="#8A8A90" />
<rect x="357" y="17" width="14" height="15" fill="#000" />
<rect x="357" y="24" width="14" height="1" fill="#8A8A90" />
<rect x="410" y="16" width="16" height="17" fill="#8A8A90" />
<rect x="411" y="17" width="14" height="15" fill="#000" />
<rect x="411" y="24" width="14" height="1" fill="#8A8A90" />
<rect x="7" y="16" width="15" height="17" fill="#2A2C34" />
<rect x="8" y="17" width="13" height="15" fill="#1A1C24" />
<rect x="491" y="16" width="15" height="17" fill="#2A2C34" />
<rect x="492" y="17" width="13" height="15" fill="#1A1C24" />
</svg>
<div class="t" style="left:708px;top:117px;font-size:13px;font-weight:bold">Front</div>
<div class="t" style="left:741px;top:127px;font-size:11px;letter-spacing:-0.4px">X Crop:</div>
<div class="sunk" style="left:787px;top:120px;width:31px;height:22px;"></div>
<div class="a" style="left:788px;top:123px;width:8px;height:13px;background:#0A246A"></div>
<div class="t" style="left:789px;top:124px;font-size:11px;color:#fff">0</div>
<div class="btn" style="left:822px;top:121px;width:16px;height:11px;"></div>
<svg class="a" style="left:822px;top:121px;" width="16" height="11" viewBox="0 0 16 11" shape-rendering="crispEdges"><path d="M6 7h4v-1h-1v-1h-2v1h-1z" fill="#000"/></svg>
<div class="btn" style="left:822px;top:132px;width:16px;height:10px;"></div>
<svg class="a" style="left:822px;top:132px;" width="16" height="10" viewBox="0 0 16 10" shape-rendering="crispEdges"><path d="M6 4h4v1h-1v1h-2v-1h-1z" fill="#000"/></svg>
<div class="t" style="left:741px;top:157px;font-size:11px;letter-spacing:-0.4px">Y Crop:</div>
<div class="sunk" style="left:787px;top:147px;width:31px;height:22px;"></div>
<div class="t" style="left:790px;top:151px;font-size:11px;">0</div>
<div class="btn" style="left:822px;top:148px;width:16px;height:11px;"></div>
<svg class="a" style="left:822px;top:148px;" width="16" height="11" viewBox="0 0 16 11" shape-rendering="crispEdges"><path d="M6 7h4v-1h-1v-1h-2v1h-1z" fill="#000"/></svg>
<div class="btn" style="left:822px;top:159px;width:16px;height:10px;"></div>
<svg class="a" style="left:822px;top:159px;" width="16" height="10" viewBox="0 0 16 10" shape-rendering="crispEdges"><path d="M6 4h4v1h-1v1h-2v-1h-1z" fill="#000"/></svg>
<div class="t" style="left:742px;top:179px;font-size:11px;letter-spacing:-0.4px">X Size:</div>
<div class="sunk" style="left:787px;top:173px;width:31px;height:22px;"></div>
<div class="t" style="left:790px;top:177px;font-size:11px;">512</div>
<div class="btn" style="left:822px;top:174px;width:16px;height:11px;"></div>
<svg class="a" style="left:822px;top:174px;" width="16" height="11" viewBox="0 0 16 11" shape-rendering="crispEdges"><path d="M6 7h4v-1h-1v-1h-2v1h-1z" fill="#000"/></svg>
<div class="btn" style="left:822px;top:185px;width:16px;height:10px;"></div>
<svg class="a" style="left:822px;top:185px;" width="16" height="10" viewBox="0 0 16 10" shape-rendering="crispEdges"><path d="M6 4h4v1h-1v1h-2v-1h-1z" fill="#000"/></svg>
<div class="t" style="left:743px;top:209px;font-size:11px;letter-spacing:-0.4px">Y Size:</div>
<div class="sunk" style="left:787px;top:199px;width:31px;height:22px;"></div>
<div class="t" style="left:790px;top:203px;font-size:11px;">55</div>
<div class="btn" style="left:822px;top:200px;width:16px;height:11px;"></div>
<svg class="a" style="left:822px;top:200px;" width="16" height="11" viewBox="0 0 16 11" shape-rendering="crispEdges"><path d="M6 7h4v-1h-1v-1h-2v1h-1z" fill="#000"/></svg>
<div class="btn" style="left:822px;top:211px;width:16px;height:10px;"></div>
<svg class="a" style="left:822px;top:211px;" width="16" height="10" viewBox="0 0 16 10" shape-rendering="crispEdges"><path d="M6 4h4v1h-1v1h-2v-1h-1z" fill="#000"/></svg>
<div class="t" style="left:770px;top:233px;font-size:11px;">X Tiles</div>
<div class="sunk" style="left:807px;top:227px;width:31px;height:22px;"></div>
<div class="t" style="left:810px;top:231px;font-size:11px;">1</div>
<div class="t" style="left:770px;top:259px;font-size:11px;">Y Tiles</div>
<div class="sunk" style="left:807px;top:252px;width:31px;height:22px;"></div>
<div class="t" style="left:810px;top:256px;font-size:11px;">1</div>
<div class="sunk" style="left:740px;top:342px;width:13px;height:13px;"></div>
<div class="t" style="left:758px;top:344px;font-size:11px;">Invert X</div>
<div class="sunk" style="left:740px;top:365px;width:13px;height:13px;"></div>
<div class="t" style="left:758px;top:367px;font-size:11px;">Invert Y</div>
<div class="btn" style="left:786px;top:539px;width:53px;height:23px;"></div>
<div class="t" style="left:798px;top:545px;font-size:11px;">Reset</div>
<div class="btn" style="left:193px;top:641px;width:75px;height:23px;"></div>
<div class="t" style="left:214px;top:647px;font-size:11px;">Cancel</div>
<div class="pane" style="left:344px;top:641px;width:95px;height:23px;"></div>
<div class="t" style="left:359px;top:647px;font-size:11px;">x: 539</div>
<div class="t" style="left:393px;top:647px;font-size:11px;">y: 421</div>
<div class="a" style="left:508px;top:641px;width:75px;height:23px;background:#000"></div>
<div class="btn" style="left:509px;top:642px;width:73px;height:21px;"></div>
<div class="t" style="left:538px;top:647px;font-size:11px;">OK</div>
<div class="a" style="left:0px;top:741px;width:1024px;height:27px;background:#D3D1C3;box-shadow:inset 0 1px #D3D1C3,inset 0 2px #fff"></div>
<div class="btn" style="left:2px;top:744px;width:78px;height:22px;"></div>
<div class="t" style="left:25px;top:750px;font-size:12px;font-weight:bold;letter-spacing:-0.4px">Démarrer</div>
<svg class="a" style="left:5px;top:747px" width="18" height="15" viewBox="0 0 18 15"><path d="M1 4h3v1h-3zM1 7h3v1h-3zM1 10h3v1h-3z" fill="#D02020"/><path d="M2 5h3v1h-3zM2 8h3v1h-3zM2 11h3v1h-3z" fill="#2040D0"/><path d="M6 3Q9 1 11 2V7Q9 6 6 8Z" fill="#E02010"/><path d="M11 2Q14 3 16 2V7Q14 8 11 7Z" fill="#20A020"/><path d="M6 8Q9 6 11 7V12Q9 11 6 13Z" fill="#1030D0"/><path d="M11 7Q14 8 16 7V12Q14 13 11 12Z" fill="#E0C010"/><path d="M5.5 2.5V13.5M16.5 1.5V12.5" stroke="#000" stroke-width="1"/></svg>
<div class="a" style="left:82px;top:744px;width:1px;height:22px;background:#808080"></div>
<div class="a" style="left:83px;top:744px;width:1px;height:22px;background:#fff"></div>
<div class="a" style="left:86px;top:745px;width:3px;height:19px;background:#D3D1C3;box-shadow:inset 1px 1px #fff,inset -1px -1px #808080"></div>
<div class="a" style="left:308px;top:744px;width:1px;height:22px;background:#808080"></div>
<div class="a" style="left:309px;top:744px;width:1px;height:22px;background:#fff"></div>
<div class="a" style="left:312px;top:745px;width:3px;height:19px;background:#D3D1C3;box-shadow:inset 1px 1px #fff,inset -1px -1px #808080"></div>
<svg class="a" style="left:97px;top:747px" width="17" height="16" viewBox="0 0 17 16"><rect x="1" y="2" width="14" height="13" fill="#2870B8"/><rect x="3" y="4" width="10" height="10" fill="#F0F0F0" stroke="#203040" stroke-width="1"/><path d="M6 10L13 2" stroke="#E0A020" stroke-width="2"/><path d="M5.5 8.5V12.5H9.5" stroke="#000" fill="none"/></svg>
<svg class="a" style="left:120px;top:747px" width="17" height="16" viewBox="0 0 17 16"><path d="M3 9.5H13Q13 4 8.5 4Q4 4 3.5 9Q3.5 13.5 8 13.5Q11 13.5 12.5 11.5" fill="none" stroke="#1A5AC8" stroke-width="2.6"/><path d="M1 12Q0 4 12 2Q17 1 15 5" fill="none" stroke="#3A8AE8" stroke-width="1.2"/></svg>
<svg class="a" style="left:143px;top:747px" width="16" height="16" viewBox="0 0 16 16"><rect x="0" y="0" width="16" height="16" fill="#F4F0F0"/><path d="M7 1L9.5 4.5L13 2L12 6.5L16 8L12 10L14 14L9 12L7 16L5.5 11.5L1 13L3 8.5L0 5L4.5 4.5Z" fill="#E81010"/><circle cx="8" cy="8" r="3.5" fill="#E81010"/></svg>
<svg class="a" style="left:166px;top:747px" width="16" height="16" viewBox="0 0 16 16" shape-rendering="crispEdges"><rect x="0" y="0" width="16" height="16" fill="#1838A8"/><path d="M1 1L15 15M15 1L1 15M8 1V15M1 8H15" stroke="#E0E040" stroke-width="1.2"/><rect x="5" y="5" width="6" height="6" fill="#D8D040"/></svg>
<svg class="a" style="left:189px;top:747px" width="17" height="16" viewBox="0 0 17 16"><path d="M0 1H16L0 16Z" fill="#1838A8"/><path d="M4 6L9 2L15 8L10 13Z" fill="#F8F8F8" stroke="#000" stroke-width="0.8"/><circle cx="12" cy="9" r="1.2" fill="#20A040"/></svg>
<svg class="a" style="left:212px;top:747px" width="17" height="16" viewBox="0 0 17 16"><path d="M0 1H16L0 16Z" fill="#1838A8"/><path d="M4 4L14 14" stroke="#000" stroke-width="2.4"/><path d="M4 4L7 7" stroke="#fff" stroke-width="2"/></svg>
<svg class="a" style="left:235px;top:747px" width="16" height="16" viewBox="0 0 16 16"><rect x="0.5" y="0.5" width="15" height="15" fill="#fff" stroke="#F0B020" stroke-width="2"/><path d="M4 2.5L13 8L4 13.5Z" fill="#404880"/></svg>
<svg class="a" style="left:258px;top:749px" width="17" height="14" viewBox="0 0 17 14"><ellipse cx="8.5" cy="6" rx="8" ry="5.5" fill="#0A18D8"/><path d="M6 11L5 14L9 11Z" fill="#0A18D8"/><path d="M8 3V9L11 6Z" fill="#fff"/></svg>
<div class="a" style="left:319px;top:744px;width:97px;height:22px;background:#D3D1C3;box-shadow:inset -1px -1px #404040,inset 1px 1px #fff,inset -2px -2px #808080"></div>
<svg class="a" style="left:323px;top:748px" width="17" height="13" viewBox="0 0 17 13"><path d="M0.5 2.5H5.5L6.5 3.5H14.5V12.5H0.5Z" fill="#F8F090" stroke="#000"/><path d="M0.5 12.5L3.5 5.5H16.5L14.5 12.5Z" fill="#F0E070" stroke="#000"/></svg>
<div class="t" style="left:341px;top:751px;font-size:11px;letter-spacing:0.1px">MSTS</div>
<div class="a" style="left:418px;top:744px;width:97px;height:22px;background:#D3D1C3;box-shadow:inset -1px -1px #404040,inset 1px 1px #fff,inset -2px -2px #808080"></div>
<svg class="a" style="left:422px;top:748px" width="17" height="13" viewBox="0 0 17 13"><path d="M0.5 2.5H5.5L6.5 3.5H14.5V12.5H0.5Z" fill="#F8F090" stroke="#000"/><path d="M0.5 12.5L3.5 5.5H16.5L14.5 12.5Z" fill="#F0E070" stroke="#000"/></svg>
<div class="t" style="left:440px;top:751px;font-size:11px;letter-spacing:0.1px">TRAINSET</div>
<div class="a" style="left:517px;top:744px;width:97px;height:22px;background:#D3D1C3;box-shadow:inset -1px -1px #404040,inset 1px 1px #fff,inset -2px -2px #808080"></div>
<svg class="a" style="left:521px;top:748px" width="17" height="13" viewBox="0 0 17 13"><path d="M0.5 2.5H5.5L6.5 3.5H14.5V12.5H0.5Z" fill="#F8F090" stroke="#000"/><path d="M0.5 12.5L3.5 5.5H16.5L14.5 12.5Z" fill="#F0E070" stroke="#000"/></svg>
<div class="t" style="left:539px;top:751px;font-size:11px;letter-spacing:0.1px">TSM</div>
<div class="a" style="left:616px;top:744px;width:97px;height:22px;background:#D3D1C3;box-shadow:inset -1px -1px #404040,inset 1px 1px #fff,inset -2px -2px #808080"></div>
<svg class="a" style="left:620px;top:748px" width="17" height="13" viewBox="0 0 17 13"><path d="M0.5 2.5H5.5L6.5 3.5H14.5V12.5H0.5Z" fill="#F8F090" stroke="#000"/><path d="M0.5 12.5L3.5 5.5H16.5L14.5 12.5Z" fill="#F0E070" stroke="#000"/></svg>
<div class="t" style="left:638px;top:751px;font-size:11px;letter-spacing:0.1px">proj2</div>
<div class="a" style="left:715px;top:744px;width:96px;height:22px;background-color:#E8E6E0;background-image:repeating-conic-gradient(#fff 0 25%,#D3D1C3 0 50%);background-size:2px 2px;box-shadow:inset 1px 1px #404040,inset -1px -1px #fff,inset 2px 2px #808080"></div>
<svg class="a" style="left:719px;top:748px" width="16" height="16" viewBox="0 0 16 16"><rect width="16" height="16" fill="#000"/><path d="M4 14 L7 5 L8 3 L9 5" stroke="#fff" stroke-width="1.3" fill="none"/><path d="M9 5 L11 10 L12 12" stroke="#E8E840" stroke-width="1.5" fill="none"/><circle cx="8" cy="2.5" r="1" fill="none" stroke="#fff" stroke-width="0.6"/></svg>

<div class="t" style="left:738px;top:750px;font-size:12px;font-weight:bold;letter-spacing:0.1px">z8200re.d...</div>
<div class="a" style="left:919px;top:744px;width:103px;height:22px;background:#D3D1C3;box-shadow:inset 1px 1px #808080,inset -1px -1px #fff"></div>
<svg class="a" style="left:922px;top:747px" width="18" height="17" viewBox="0 0 18 17"><rect x="7" y="1" width="9" height="8" fill="#E0E0F0" stroke="#202060"/><rect x="9" y="3" width="5" height="4" fill="#3050B0"/><rect x="1" y="8" width="9" height="8" rx="2" fill="#101010"/><circle cx="4.5" cy="12" r="2" fill="#fff"/><path d="M3.5 12h2M4.5 11v2" stroke="#C02020"/><rect x="10" y="9" width="7" height="7" fill="#E0E0E0" stroke="#202020"/></svg>
<svg class="a" style="left:941px;top:747px" width="17" height="17" viewBox="0 0 17 17"><path d="M1 6H5L10 1V16L5 11H1Z" fill="#F0E060" stroke="#404020" stroke-width="0.8"/><path d="M12 5L15 3M12.5 8.5H16M12 12L15 14" stroke="#C0A080" stroke-width="1"/></svg>
<svg class="a" style="left:959px;top:749px" width="17" height="14" viewBox="0 0 17 14"><ellipse cx="8.5" cy="6" rx="8" ry="5.5" fill="#0A18D8"/><path d="M6 11L5 14L9 11Z" fill="#0A18D8"/><path d="M8 3V9L11 6Z" fill="#fff"/></svg>
<div class="t" style="left:987px;top:751px;font-size:11px;">23:12</div>
</body></html>
